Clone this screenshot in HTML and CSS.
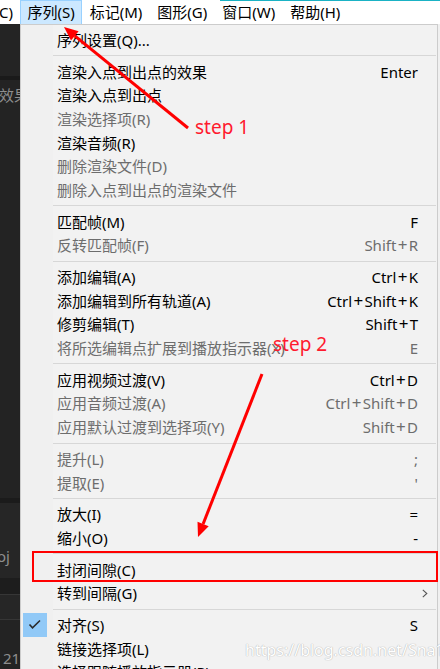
FILE: index.html
```html
<!DOCTYPE html>
<html lang="zh-CN">
<head>
<meta charset="utf-8">
<title>序列菜单</title>
<link rel="stylesheet" href="styles.css">
</head>
<body>
<div class="menubar">
  <div class="mb-item mb-first"><span>C)</span></div>
  <div class="mb-item mb-active">序列(S)</div>
  <div class="mb-item">标记(M)</div>
  <div class="mb-item">图形(G)</div>
  <div class="mb-item">窗口(W)</div>
  <div class="mb-item">帮助(H)</div>
</div>
<div class="main">
  <div class="side">
    <div class="s-a"></div>
    <div class="s-stripe"></div>
    <div class="s-text">效果</div>
    <div class="s-stripe2"></div>
    <div class="s-b">oj</div>
    <div class="s-c"></div>
    <div class="s-d"></div>
    <div class="s-e">21</div>
  </div>
  <div class="dropdown">
    <div class="item"><span class="gutter"></span><span class="label">序列设置(Q)...</span></div>
    <div class="sep"></div>
    <div class="item"><span class="gutter"></span><span class="label">渲染入点到出点的效果</span><span class="key">Enter</span></div>
    <div class="item"><span class="gutter"></span><span class="label">渲染入点到出点</span></div>
    <div class="item disabled"><span class="gutter"></span><span class="label">渲染选择项(R)</span></div>
    <div class="item"><span class="gutter"></span><span class="label">渲染音频(R)</span></div>
    <div class="item disabled"><span class="gutter"></span><span class="label">删除渲染文件(D)</span></div>
    <div class="item disabled"><span class="gutter"></span><span class="label">删除入点到出点的渲染文件</span></div>
    <div class="sep"></div>
    <div class="item"><span class="gutter"></span><span class="label">匹配帧(M)</span><span class="key">F</span></div>
    <div class="item disabled"><span class="gutter"></span><span class="label">反转匹配帧(F)</span><span class="key">Shift<span class="plus">+</span>R</span></div>
    <div class="sep"></div>
    <div class="item"><span class="gutter"></span><span class="label">添加编辑(A)</span><span class="key">Ctrl<span class="plus">+</span>K</span></div>
    <div class="item"><span class="gutter"></span><span class="label">添加编辑到所有轨道(A)</span><span class="key">Ctrl<span class="plus">+</span>Shift<span class="plus">+</span>K</span></div>
    <div class="item"><span class="gutter"></span><span class="label">修剪编辑(T)</span><span class="key">Shift<span class="plus">+</span>T</span></div>
    <div class="item disabled"><span class="gutter"></span><span class="label">将所选编辑点扩展到播放指示器(X)</span><span class="key">E</span></div>
    <div class="sep"></div>
    <div class="item"><span class="gutter"></span><span class="label">应用视频过渡(V)</span><span class="key">Ctrl<span class="plus">+</span>D</span></div>
    <div class="item disabled"><span class="gutter"></span><span class="label">应用音频过渡(A)</span><span class="key">Ctrl<span class="plus">+</span>Shift<span class="plus">+</span>D</span></div>
    <div class="item disabled"><span class="gutter"></span><span class="label">应用默认过渡到选择项(Y)</span><span class="key">Shift<span class="plus">+</span>D</span></div>
    <div class="sep"></div>
    <div class="item disabled"><span class="gutter"></span><span class="label">提升(L)</span><span class="key">;</span></div>
    <div class="item disabled"><span class="gutter"></span><span class="label">提取(E)</span><span class="key">'</span></div>
    <div class="sep"></div>
    <div class="item"><span class="gutter"></span><span class="label">放大(I)</span><span class="key">=</span></div>
    <div class="item"><span class="gutter"></span><span class="label">缩小(O)</span><span class="key">-</span></div>
    <div class="sep"></div>
    <div class="item"><span class="gutter"></span><span class="label">封闭间隙(C)</span></div>
    <div class="item"><span class="gutter"></span><span class="label">转到间隔(G)</span><span class="key sub"><svg width="6" height="9" viewBox="0 0 6 9"><polyline points="0.8,0.8 4.8,4.5 0.8,8.2" fill="none" stroke="#555" stroke-width="1.1"/></svg></span></div>
    <div class="sep"></div>
    <div class="item"><span class="gutter"><span class="check"><svg width="24" height="24" viewBox="0 0 24 24"><polyline points="6.5,11.5 9.5,14.8 17,7.5" fill="none" stroke="#2b2b2b" stroke-width="1.6"/></svg></span></span><span class="label">对齐(S)</span><span class="key">S</span></div>
    <div class="item"><span class="gutter"></span><span class="label">链接选择项(L)</span></div>
    <div class="item"><span class="gutter"></span><span class="label">选择跟随播放指示器(P)</span></div>
  </div>
</div>

<svg class="annot" width="440" height="669" viewBox="0 0 440 669">
  <line x1="188" y1="128" x2="74.8" y2="35.9" stroke="#ff0000" stroke-width="3"/>
  <polygon points="64,27 78.6,31.3 71,40.5" fill="#ff0000"/>
  <line x1="262" y1="374" x2="203.1" y2="524" stroke="#ff0000" stroke-width="3"/>
  <polygon points="198,537 208.7,526.2 197.5,521.8" fill="#ff0000"/>
  <rect x="33" y="552" width="404" height="29" fill="none" stroke="#ff0000" stroke-width="2"/>
</svg>
<div class="step step1">step 1</div>
<div class="step step2">step 2</div>
<div class="watermark">https://blog.csdn.net/Sna1l</div>
</body>
</html>
```

FILE: styles.css
```css
html, body {
  margin: 0;
  padding: 0;
}
body {
  width: 440px;
  height: 669px;
  overflow: hidden;
  position: relative;
  background: #f0f0f0;
  font-family: "Noto Sans", "Noto Sans CJK SC", sans-serif;
  font-size: 15px;
  color: #000;
}

.menubar {
  display: flex;
  height: 24px;
  background: #ffffff;
  position: relative;
}
.menubar::before {
  content: "";
  position: absolute;
  top: 0;
  left: 220px;
  right: 0;
  height: 1px;
  background: #1ab2c4;
}
.mb-item {
  padding: 0 7.5px;
  line-height: 24px;
  white-space: nowrap;
  box-sizing: border-box;
}
.mb-first {
  width: 20px;
  padding: 0;
  overflow: hidden;
}
.mb-first span {
  display: inline-block;
  margin-left: -1px;
}
.mb-active {
  background: #cce8ff;
  border: 1px solid #99d1ff;
  border-bottom: none;
  padding: 0 6.5px;
  line-height: 23px;
}

.main {
  display: flex;
  height: 645px;
}

.side {
  width: 20px;
  flex-shrink: 0;
  background: #232323;
  overflow: hidden;
  color: #8e8e8e;
  white-space: nowrap;
  display: flex;
  flex-direction: column;
}
.s-a {
  height: 52px;
  background: #242424;
}
.s-stripe {
  height: 4px;
  background: #1a1a1a;
}
.s-text {
  height: 420px;
  padding-top: 4px;
  box-sizing: border-box;
  line-height: 22px;
  margin-left: -1px;
  background: #232323;
}
.s-stripe2 {
  height: 5px;
  background: #1b1b1b;
}
.s-b {
  height: 75px;
  box-sizing: border-box;
  padding-top: 43px;
  line-height: 20px;
  margin-left: -3px;
  background: #262626;
}
.s-c {
  height: 16px;
  background: #1d1d1d;
  border-bottom: 1px solid #363636;
}
.s-d {
  height: 24px;
  background: #262626;
  border-bottom: 1px solid #363636;
}
.s-e {
  flex: 1;
  padding: 27px 0 0 3px;
  line-height: 22px;
  background: #232323;
}

.dropdown {
  width: 418px;
  flex-shrink: 0;
  box-sizing: border-box;
  border: 1px solid #cccccc;
  border-bottom: none;
  background: linear-gradient(to right, #f0f0f0 32px, #f2f2f2 32px);
  padding-top: 3px;
}
.item {
  display: flex;
  align-items: center;
  height: 23.7px;
  padding-right: 19px;
  white-space: nowrap;
  line-height: 20px;
}
.gutter {
  width: 32px;
  height: 100%;
  flex-shrink: 0;
  display: flex;
  align-items: center;
}
.label {
  flex: 1;
  padding-left: 4px;
}
.key {
  text-align: right;
}
.plus {
  font-size: 17px;
  line-height: 15px;
  padding: 0 1.3px;
}
.disabled {
  color: #6d6d6d;
}
.sub {
  display: flex;
  align-items: center;
  margin-right: -10px;
}
.check {
  display: block;
  width: 24px;
  height: 24px;
  margin-left: 2px;
  background: #91c9f7;
}
.check svg {
  display: block;
}
.sep {
  height: 1px;
  background: #d7d7d7;
  margin: 3.5px 1px 3.5px 32px;
}

.annot {
  position: absolute;
  left: 0;
  top: 0;
  pointer-events: none;
}
.step {
  position: absolute;
  color: #ff1a2e;
  font-family: "Noto Sans", sans-serif;
  font-size: 19px;
  line-height: 24px;
  white-space: nowrap;
}
.step1 {
  left: 195px;
  top: 115px;
}
.step2 {
  left: 273px;
  top: 332px;
}
.watermark {
  position: absolute;
  left: 245px;
  top: 639px;
  font-family: "Noto Sans", sans-serif;
  font-size: 16px;
  line-height: 22px;
  color: #ffffff;
  text-shadow: 0 0 1px #b0b0b0, 0 0 1px #c0c0c0;
  white-space: nowrap;
}
```
